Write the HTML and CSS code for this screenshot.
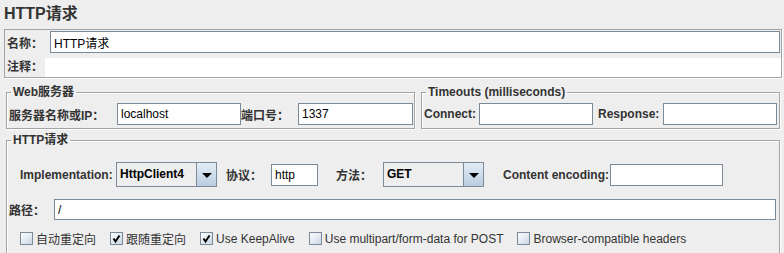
FILE: index.html
```html
<!DOCTYPE html>
<html lang="zh-CN">
<head>
    <meta charset="UTF-8">
    <title>HTTP请求</title>
    <link rel="stylesheet" href="styles.css">
</head>
<body>
    <!-- Title -->
    <h1 class="title">HTTP请求</h1>

    <!-- Name / comment -->
    <div class="name-box">
        <div class="name-row">
            <span class="label name-label">名称：</span>
            <input class="field name-field" value="HTTP请求">
        </div>
        <div class="comment-row">
            <span class="label comment-label">注释：</span>
            <div class="comment-field"></div>
        </div>
    </div>

    <!-- Web server + timeouts -->
    <div class="server-row">
        <fieldset class="group web-group">
            <legend>Web服务器</legend>
            <div class="group-line">
                <span class="label host-label">服务器名称或IP：</span>
                <input class="field host-field" value="localhost">
                <span class="label port-label">端口号：</span>
                <input class="field port-field" value="1337">
            </div>
        </fieldset>
        <fieldset class="group timeout-group">
            <legend>Timeouts (milliseconds)</legend>
            <div class="group-line">
                <span class="label connect-label">Connect:</span>
                <input class="field timeout-field">
                <span class="label response-label">Response:</span>
                <input class="field timeout-field">
            </div>
        </fieldset>
    </div>

    <!-- HTTP request -->
    <fieldset class="group http-group">
        <legend>HTTP请求</legend>
        <div class="impl-row">
            <span class="label impl-label">Implementation:</span>
            <div class="combo">
                <span class="combo-text">HttpClient4</span>
                <span class="combo-btn"><span class="arrow"></span></span>
            </div>
            <span class="label proto-label">协议：</span>
            <input class="field proto-field" value="http">
            <span class="label method-label">方法：</span>
            <div class="combo">
                <span class="combo-text">GET</span>
                <span class="combo-btn"><span class="arrow"></span></span>
            </div>
            <span class="label enc-label">Content encoding:</span>
            <input class="field enc-field">
        </div>

        <div class="path-row">
            <span class="label path-label">路径：</span>
            <input class="field path-field" value="/">
        </div>

        <div class="check-row">
            <label class="check"><span class="box"></span>自动重定向</label>
            <label class="check"><span class="box"><svg width="11" height="11" viewBox="0 0 11 11"><path d="M2.5 5.5 L4.5 8.5 L8.5 2.5" fill="none" stroke="#000" stroke-width="2"/></svg></span>跟随重定向</label>
            <label class="check"><span class="box"><svg width="11" height="11" viewBox="0 0 11 11"><path d="M2.5 5.5 L4.5 8.5 L8.5 2.5" fill="none" stroke="#000" stroke-width="2"/></svg></span>Use KeepAlive</label>
            <label class="check"><span class="box"></span>Use multipart/form-data for POST</label>
            <label class="check"><span class="box"></span>Browser-compatible headers</label>
        </div>
    </fieldset>
</body>
</html>
```

FILE: styles.css
```css
/* Page base */
body {
    margin: 0;
    background-color: #eeeeee;
    font-family: "Liberation Sans", Arial, "Noto Sans CJK SC", sans-serif;
    font-size: 12px;
    color: #333333;
    overflow: hidden;
}

.title {
    margin: 0;
    padding: 2px 4px 0;
    height: 29px;
    box-sizing: border-box;
    font-size: 16px;
    line-height: 24px;
    font-weight: bold;
}

.label {
    font-weight: bold;
    white-space: nowrap;
    flex: none;
}

/* Text fields */
.field {
    box-sizing: border-box;
    height: 22px;
    margin: 0;
    padding: 0 3px;
    border: 1px solid #7a8a99;
    background-color: white;
    font-family: inherit;
    font-size: 12px;
    color: #000;
    outline: none;
    flex: none;
}

/* Name / comment box */
.name-box {
    margin: 0 2px 0 4px;
    border: 1px solid #a3a3a3;
    box-shadow: 1px 1px 0 #ffffff;
}

.name-row {
    display: flex;
    align-items: center;
    height: 23px;
    padding: 1px 1px 0 2px;
    box-sizing: border-box;
}

.name-label {
    width: 43px;
}

.name-field {
    flex: 1;
    height: 22px;
}

.comment-row {
    display: flex;
    margin-top: 5px;
    height: 19px;
}

.comment-label {
    width: 38px;
    padding-left: 2px;
    line-height: 19px;
}

.comment-field {
    flex: 1;
    background-color: white;
}

/* Group boxes */
.group {
    margin: 0;
    padding: 0 2px;
    border: 1px solid #a3a3a3;
    box-shadow: 1px 1px 0 #ffffff, inset 1px 1px 0 #ffffff;
    min-width: 0;
}

.group legend {
    margin-left: 2px;
    padding: 0 2px;
    font-weight: bold;
    font-size: 12px;
    line-height: 15px;
}

.server-row {
    display: flex;
    gap: 6px;
    margin: 7px 4px 0 6px;
}

.web-group {
    flex: 0 0 409px;
    box-sizing: border-box;
}

.timeout-group {
    flex: 1;
}

.group-line {
    display: flex;
    align-items: center;
    padding: 3px 0 3px;
}

.host-label { width: 108px; }
.host-field { width: 124px; }
.port-label { width: 57px; }
.port-field { width: 115px; }

.connect-label { width: 55px; }
.timeout-field { width: 114px; }
.response-label { width: 65px; margin-left: 5px; }

/* HTTP request group */
.http-group {
    margin: 4px 4px 0 6px;
    padding-bottom: 40px;
}

.impl-row {
    display: flex;
    align-items: center;
    margin-top: 14px;
    height: 25px;
}

.impl-label { width: 96px; margin-left: 11px; }
.proto-label { width: 45px; margin-left: 9px; }
.proto-field { width: 47px; height: 22px; }
.method-label { width: 47px; margin-left: 18px; }
.enc-label { width: 107px; margin-left: 19px; }
.enc-field { width: 113px; }

/* Combo box */
.combo {
    display: flex;
    width: 101px;
    height: 25px;
    box-sizing: border-box;
    border: 1px solid #7a8a99;
    background-color: #eeeeee;
    flex: none;
}

.combo-text {
    flex: 1;
    padding-left: 3px;
    line-height: 23px;
    font-weight: bold;
    color: #000;
}

.combo-btn {
    width: 19px;
    border-left: 1px solid #7a8a99;
    background: linear-gradient(#e4edf6, #b9cde0);
    display: flex;
    align-items: center;
    justify-content: center;
}

.arrow {
    width: 0;
    height: 0;
    border-left: 5px solid transparent;
    border-right: 5px solid transparent;
    border-top: 5px solid #000;
    margin-top: 1px;
}

.path-row {
    display: flex;
    align-items: center;
    margin-top: 12px;
}

.path-label { width: 45px; }
.path-field { flex: 1; height: 21px; margin-right: 1px; }

/* Checkboxes */
.check-row {
    display: flex;
    gap: 14px;
    margin: 12px 0 0 11px;
}

.check {
    display: flex;
    align-items: center;
    gap: 3px;
    height: 13px;
    white-space: nowrap;
}

.box {
    width: 13px;
    height: 13px;
    box-sizing: border-box;
    border: 1px solid #7a8a99;
    background: linear-gradient(135deg, #ffffff, #c8d6e4);
    display: flex;
    align-items: center;
    justify-content: center;
}
```
